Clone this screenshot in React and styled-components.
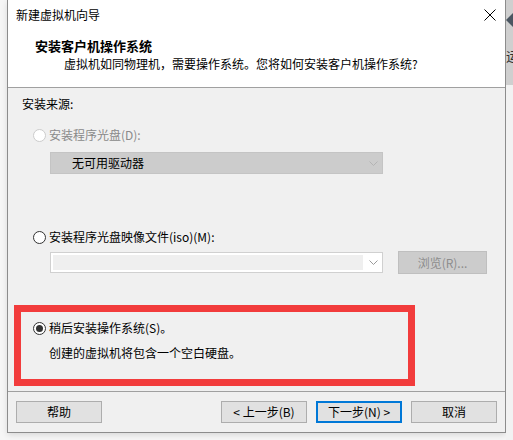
import React from 'react'
import styled, { createGlobalStyle } from 'styled-components'

const GlobalStyle = createGlobalStyle`
  html, body {
    margin: 0;
    padding: 0;
    background: #f6f6f6;
  }
  * {
    box-sizing: border-box;
  }
`

const FONT = `"Microsoft YaHei", "Noto Sans CJK SC", "Noto Sans", sans-serif`

const Page = styled.div`
  display: flex;
  width: 513px;
  height: 440px;
  overflow: hidden;
  background: #f6f6f6;
  font-family: ${FONT};
  font-size: 12px;
  color: #000;
`

const Window = styled.div`
  display: flex;
  flex-direction: column;
  width: 499px;
  height: 433px;
  margin-left: 7px;
  background: #f0f0f0;
  border: 1px solid #8c8c8c;
  border-top: none;
  box-shadow: 0 2px 6px rgba(0, 0, 0, 0.12);
  flex-shrink: 0;
`

const Header = styled.div`
  height: 88px;
  background: #fff;
  border-bottom: 1px solid #a0a0a0;
  flex-shrink: 0;
`

const TitleBar = styled.div`
  display: flex;
  align-items: center;
  justify-content: space-between;
  height: 30px;
  padding: 0 9px 0 8px;
  line-height: 16px;
`

const CloseButton = styled.div`
  display: flex;
  width: 12px;
  height: 12px;
`

const Heading = styled.div`
  padding: 7px 0 0 27px;
`

const HeadTitle = styled.div`
  font-size: 13px;
  font-weight: bold;
  line-height: 18px;
`

const HeadSub = styled.div`
  padding-left: 29px;
  line-height: 18px;
`

const Body = styled.div`
  flex: 1;
  display: flex;
  flex-direction: column;
  padding: 8px 14px 0 14px;
`

const Label = styled.div`
  line-height: 16px;
`

const RadioRow = styled.label`
  display: flex;
  align-items: center;
  gap: 3px;
  height: 16px;
  margin-top: ${p => p.$top || 0}px;
  margin-left: ${p => p.$left ?? 11}px;
  color: ${p => (p.$disabled ? '#8a8a8a' : '#000')};
  line-height: 16px;
`

const RadioCircle = styled.span`
  position: relative;
  width: 13px;
  height: 13px;
  border-radius: 50%;
  border: 1px solid ${p => (p.$disabled ? '#cccccc' : '#333')};
  background: #fff;
  flex-shrink: 0;
  &::after {
    content: '';
    display: ${p => (p.$checked ? 'block' : 'none')};
    position: absolute;
    left: 2px;
    top: 2px;
    width: 7px;
    height: 7px;
    border-radius: 50%;
    background: #333;
  }
`

const Select = styled.div`
  display: flex;
  align-items: center;
  justify-content: space-between;
  width: 333px;
  height: 22px;
  margin: 9px 0 0 28px;
  padding: 0 4px 0 21px;
  background: #cccccc;
  border: 1px solid #c4c4c4;
  line-height: 16px;
`

const Chevron = styled.svg`
  width: 9px;
  height: 5px;
  flex-shrink: 0;
`

const FileRow = styled.div`
  display: flex;
  align-items: center;
  gap: 15px;
  height: 23px;
  margin: 6px 0 0 28px;
`

const Combo = styled.div`
  display: flex;
  align-items: center;
  width: 333px;
  height: 21px;
  padding: 2px 4px 2px 2px;
  background: #fff;
  border: 1px solid #d0d0d0;
`

const ComboField = styled.div`
  flex: 1;
  height: 100%;
  margin-right: 6px;
  background: #efefef;
`

const BrowseButton = styled.div`
  display: flex;
  align-items: center;
  justify-content: center;
  width: 89px;
  height: 23px;
  background: #cccccc;
  border: 1px solid #bfbfbf;
  color: #8c8c8c;
`

const Highlight = styled.div`
  width: 401px;
  height: 81px;
  margin: 31px 0 0 -8px;
  padding: 8px 0 0 0;
  border: 7px solid #f23c3c;
`

const Note = styled.div`
  margin: 9px 0 0 28px;
  line-height: 16px;
`

const Footer = styled.div`
  display: flex;
  justify-content: space-between;
  height: 41px;
  padding: 9px 8px 0 8px;
  border-top: 1px solid #a0a0a0;
  flex-shrink: 0;
`

const ButtonGroup = styled.div`
  display: flex;
  gap: 9px;
`

const Button = styled.div`
  display: flex;
  align-items: center;
  justify-content: center;
  width: 86px;
  height: 22px;
  background: #e1e1e1;
  border: ${p => (p.$primary ? '2px solid #0078d7' : '1px solid #adadad')};
  line-height: 16px;
`

const Backdrop = styled.div`
  position: relative;
  flex: 1;
  background: linear-gradient(#cfcfcf, #cfcfcf 85px, #f2f2f2 85px);
  overflow: hidden;
`

const BackdropMark = styled.div`
  position: absolute;
  left: 2px;
  top: 15px;
  width: 10px;
  height: 10px;
  background: #4b5661;
  transform: rotate(45deg);
`

const BackdropText = styled.div`
  position: absolute;
  left: 0;
  top: 46px;
  font-size: 13px;
  color: #333;
`

const ChevronIcon = ({ color }) => (
  <Chevron viewBox="0 0 9 5">
    <path d="M0.5 0.5 L4.5 4.5 L8.5 0.5" fill="none" stroke={color} strokeWidth="1" />
  </Chevron>
)

export default function App() {
  return (
    <Page>
      <GlobalStyle />
      <Window>
        <Header>
          <TitleBar>
            <span>新建虚拟机向导</span>
            <CloseButton>
              <svg width="12" height="12" viewBox="0 0 12 12">
                <path d="M0.5 0.5 L11.5 11.5 M11.5 0.5 L0.5 11.5" stroke="#000" strokeWidth="1" />
              </svg>
            </CloseButton>
          </TitleBar>
          <Heading>
            <HeadTitle>安装客户机操作系统</HeadTitle>
            <HeadSub>虚拟机如同物理机，需要操作系统。您将如何安装客户机操作系统?</HeadSub>
          </Heading>
        </Header>
        <Body>
          <Label>安装来源:</Label>
          <RadioRow $top={15} $disabled>
            <RadioCircle $disabled />
            安装程序光盘(D):
          </RadioRow>
          <Select>
            <span>无可用驱动器</span>
            <ChevronIcon color="#b4b4b4" />
          </Select>
          <RadioRow $top={55}>
            <RadioCircle />
            安装程序光盘映像文件(iso)(M):
          </RadioRow>
          <FileRow>
            <Combo>
              <ComboField />
              <ChevronIcon color="#9a9a9a" />
            </Combo>
            <BrowseButton>浏览(R)...</BrowseButton>
          </FileRow>
          <Highlight>
            <RadioRow $left={12}>
              <RadioCircle $checked />
              稍后安装操作系统(S)。
            </RadioRow>
            <Note>创建的虚拟机将包含一个空白硬盘。</Note>
          </Highlight>
        </Body>
        <Footer>
          <Button>帮助</Button>
          <ButtonGroup>
            <Button>&lt; 上一步(B)</Button>
            <Button $primary>下一步(N) &gt;</Button>
            <Button>取消</Button>
          </ButtonGroup>
        </Footer>
      </Window>
      <Backdrop>
        <BackdropMark />
        <BackdropText>运</BackdropText>
      </Backdrop>
    </Page>
  )
}
